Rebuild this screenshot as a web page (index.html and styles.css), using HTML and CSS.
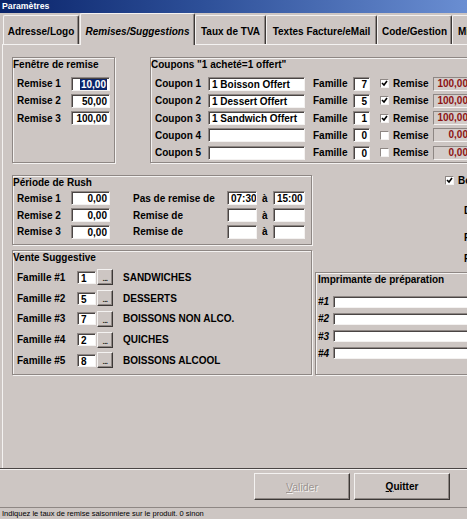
FILE: index.html
```html
<!DOCTYPE html>
<html lang="fr">
<head>
<meta charset="utf-8">
<title>Paramètres</title>
<link rel="stylesheet" href="styles.css">
</head>
<body>
<div class="window">
  <div class="titlebar">Paramètres</div>
  <div class="tabs">
    <div class="tab t1">Adresse/Logo</div>
    <div class="tab active t2">Remises/Suggestions</div>
    <div class="tab t3">Taux de TVA</div>
    <div class="tab t4">Textes Facture/eMail</div>
    <div class="tab t5">Code/Gestion</div>
    <div class="tab t6">Mise en page</div>
  </div>

  <div class="panel">
    <div class="top">
      <div class="group g-fenetre">
        <div class="gtitle">Fenêtre de remise</div>
        <div class="rows">
          <div class="row r17"><span class="lbl l54">Remise 1</span><span class="field num w39"><span class="sel">10,00</span></span></div>
          <div class="row r17"><span class="lbl l54">Remise 2</span><span class="field num w39">50,00</span></div>
          <div class="row r17"><span class="lbl l54">Remise 3</span><span class="field num w39">100,00</span></div>
        </div>
      </div>

      <div class="group g-coupons">
        <div class="gtitle">Coupons "1 acheté=1 offert"</div>
        <div class="rows">
          <div class="row r17">
            <span class="lbl l53">Coupon 1</span><span class="field w97">1 Boisson Offert</span>
            <span class="lbl fam">Famille</span><span class="field num w17">7</span>
            <span class="check on"><svg viewBox="0 0 7 7" width="7" height="7"><path d="M1 3 L3 5 L6 1" fill="none" stroke="#000" stroke-width="1.6"/></svg></span>
            <span class="lbl rem">Remise</span><span class="ro">100,00</span>
          </div>
          <div class="row r17">
            <span class="lbl l53">Coupon 2</span><span class="field w97">1 Dessert Offert</span>
            <span class="lbl fam">Famille</span><span class="field num w17">5</span>
            <span class="check on"><svg viewBox="0 0 7 7" width="7" height="7"><path d="M1 3 L3 5 L6 1" fill="none" stroke="#000" stroke-width="1.6"/></svg></span>
            <span class="lbl rem">Remise</span><span class="ro">100,00</span>
          </div>
          <div class="row r17">
            <span class="lbl l53">Coupon 3</span><span class="field w97">1 Sandwich Offert</span>
            <span class="lbl fam">Famille</span><span class="field num w17">1</span>
            <span class="check on"><svg viewBox="0 0 7 7" width="7" height="7"><path d="M1 3 L3 5 L6 1" fill="none" stroke="#000" stroke-width="1.6"/></svg></span>
            <span class="lbl rem">Remise</span><span class="ro">100,00</span>
          </div>
          <div class="row r17">
            <span class="lbl l53">Coupon 4</span><span class="field w97"></span>
            <span class="lbl fam">Famille</span><span class="field num w17">0</span>
            <span class="check"></span>
            <span class="lbl rem">Remise</span><span class="ro">0,00</span>
          </div>
          <div class="row r17">
            <span class="lbl l53">Coupon 5</span><span class="field w97"></span>
            <span class="lbl fam">Famille</span><span class="field num w17">0</span>
            <span class="check"></span>
            <span class="lbl rem">Remise</span><span class="ro">0,00</span>
          </div>
        </div>
      </div>
    </div>

    <div class="lower">
      <div class="leftcol">
        <div class="group g-rush">
          <div class="gtitle">Période de Rush</div>
          <div class="rows rush-rows">
            <div class="row r16">
              <span class="lbl l54">Remise 1</span><span class="field num w39">0,00</span>
              <span class="lbl pas">Pas de remise de</span><span class="field w30">07:30</span>
              <span class="lbl a">à</span><span class="field w32">15:00</span>
            </div>
            <div class="row r16">
              <span class="lbl l54">Remise 2</span><span class="field num w39">0,00</span>
              <span class="lbl pas">Remise de</span><span class="field w30"></span>
              <span class="lbl a">à</span><span class="field w32"></span>
            </div>
            <div class="row r16">
              <span class="lbl l54">Remise 3</span><span class="field num w39">0,00</span>
              <span class="lbl pas">Remise de</span><span class="field w30"></span>
              <span class="lbl a">à</span><span class="field w32"></span>
            </div>
          </div>
        </div>

        <div class="group g-vente">
          <div class="gtitle">Vente Suggestive</div>
          <div class="rows vente-rows">
            <div class="row r21"><span class="lbl l60">Famille #1</span><span class="field w19">1</span><span class="dots">...</span><span class="lbl cat">SANDWICHES</span></div>
            <div class="row r21"><span class="lbl l60">Famille #2</span><span class="field w19">5</span><span class="dots">...</span><span class="lbl cat">DESSERTS</span></div>
            <div class="row r21"><span class="lbl l60">Famille #3</span><span class="field w19">7</span><span class="dots">...</span><span class="lbl cat">BOISSONS NON ALCO.</span></div>
            <div class="row r21"><span class="lbl l60">Famille #4</span><span class="field w19">2</span><span class="dots">...</span><span class="lbl cat">QUICHES</span></div>
            <div class="row r21"><span class="lbl l60">Famille #5</span><span class="field w19">8</span><span class="dots">...</span><span class="lbl cat">BOISSONS ALCOOL</span></div>
          </div>
        </div>
      </div>

      <div class="rightcol">
        <div class="row bons"><span class="check on"><svg viewBox="0 0 7 7" width="7" height="7"><path d="M1 3 L3 5 L6 1" fill="none" stroke="#000" stroke-width="1.6"/></svg></span><span class="lbl bons-lbl">Bons</span></div>
        <div class="lbl side s1">Début</div>
        <div class="lbl side s2">Fin</div>
        <div class="lbl side s3">Fin</div>
        <div class="group g-imp">
          <div class="gtitle">Imprimante de préparation</div>
          <div class="rows imp-rows">
            <div class="row r17"><span class="lbl l15">#1</span><span class="field w150"></span></div>
            <div class="row r17"><span class="lbl l15">#2</span><span class="field w150"></span></div>
            <div class="row r17"><span class="lbl l15">#3</span><span class="field w150"></span></div>
            <div class="row r17"><span class="lbl l15">#4</span><span class="field w150"></span></div>
          </div>
        </div>
      </div>
    </div>
  </div>

  <div class="footer">
    <button class="btn disabled"><u>V</u>alider</button>
    <button class="btn"><u>Q</u>uitter</button>
  </div>
  <div class="status">Indiquez le taux de remise saisonniere sur le produit. 0 sinon</div>
</div>
</body>
</html>
```

FILE: styles.css
```css
* { box-sizing: border-box; }
html, body { margin: 0; padding: 0; }
body {
  width: 467px;
  height: 519px;
  overflow: hidden;
  background: #cdc6c3;
  font: bold 10px "Liberation Sans", Arial, sans-serif;
  color: #000;
}
.window {
  display: flex;
  flex-direction: column;
  width: 467px;
  height: 519px;
  overflow: hidden;
}

/* title bar */
.titlebar {
  flex: none;
  height: 13px;
  padding-left: 2px;
  line-height: 13px;
  font-size: 8.7px;
  color: #fff;
  background: linear-gradient(90deg, #0a246a 0, #2d4f98 200px, #6a8ed2 467px);
}

/* tabs */
.tabs {
  flex: none;
  height: 31px;
  display: flex;
  align-items: flex-end;
  padding-left: 3px;
  white-space: nowrap;
  position: relative;
  z-index: 1;
}
.tab {
  flex: none;
  height: 29px;
  padding-top: 3px;
  line-height: 26px;
  text-align: center;
  border-top: 1px solid #f4f2f1;
  border-left: 1px solid #f4f2f1;
  border-right: 1px solid #3c3836;
  box-shadow: inset -1px 0 0 #8e8784;
  border-radius: 2px 2px 0 0;
  overflow: hidden;
}
.tab.active {
  height: 32px;
  padding-top: 5px;
  margin-bottom: -1px;
  font-style: italic;
  background: #cdc6c3;
}
.t1 { width: 76px; }
.t2 { width: 115px; margin-left: 1px; }
.t3 { width: 71px; }
.t4 { width: 111px; }
.t5 { width: 75px; }
.t6 { width: 80px; text-align: left; padding-left: 5px; }

/* main panel */
.panel {
  flex: none;
  height: 424px;
  margin-left: 2px;
  border-top: 1px solid #f4f2f1;
  border-left: 1px solid #f4f2f1;
  padding: 12px 0 0 9px;
}
.top {
  display: flex;
  gap: 35px;
  height: 106px;
}
.group {
  flex: none;
  border: 1px solid #8e8784;
  box-shadow: inset 1px 1px 0 #f4f2f1, 1px 1px 0 #f4f2f1;
}
.gtitle {
  height: 13px;
  line-height: 13px;
  white-space: nowrap;
}
.rows { margin-top: 4px; padding-left: 4px; }
.row {
  display: flex;
  align-items: center;
  white-space: nowrap;
}
.r17 { height: 17.25px; }
.r16 { height: 16.75px; }
.r21 { height: 20.75px; }
.lbl { flex: none; }
.l53 { width: 53px; }
.l54 { width: 54px; }
.l60 { width: 60px; }
.l15 { width: 15px; font-style: italic; }

.g-fenetre { width: 103px; }
.g-coupons { width: 340px; }

.field {
  flex: none;
  height: 14px;
  line-height: 11px;
  padding: 1px 2px 0 3px;
  background: #fff;
  border: 1px solid;
  border-color: #8e8784 #f4f2f1 #f4f2f1 #8e8784;
  box-shadow: inset 1px 1px 0 #4a4544;
  overflow: hidden;
}
.field.num { text-align: right; padding-right: 2px; }
.sel { background: #0a246a; color: #fff; padding: 0 1px; }
.w39 { width: 39px; }
.w97 { width: 97px; }
.w17 { width: 17px; }
.w30 { width: 30px; }
.w32 { width: 32px; }
.w19 { width: 19px; height: 13px; }
.w150 { width: 150px; height: 12px; }

.fam { margin-left: 8px; width: 40px; }
.rem { margin-left: 4px; width: 40px; }
.check {
  flex: none;
  width: 9px;
  height: 9px;
  margin-left: 10px;
  background: #fff;
  border: 1px solid;
  border-color: #8e8784 #f4f2f1 #f4f2f1 #8e8784;
  display: flex;
  align-items: center;
  justify-content: center;
}
.check svg { display: block; }
.ro {
  flex: none;
  width: 39px;
  height: 14px;
  line-height: 12px;
  padding-right: 3px;
  text-align: right;
  color: #8d1414;
  background: #d3ccc9;
  border: 1px solid;
  border-color: #8e8784 #f4f2f1 #f4f2f1 #8e8784;
}

/* lower section */
.lower {
  display: flex;
  gap: 3px;
  margin-top: 12px;
}
.leftcol {
  flex: none;
  width: 300px;
  display: flex;
  flex-direction: column;
  gap: 5px;
}
.g-rush { height: 70px; }
.rush-rows { margin-top: 1px; }
.pas { margin-left: 23px; width: 94px; }
.a { margin-left: 5px; width: 11px; }
.g-vente { height: 125px; }
.vente-rows { margin-top: 3px; }
.dots {
  flex: none;
  width: 16px;
  height: 16px;
  margin-left: 1px;
  padding-top: 4px;
  font-weight: bold;
  font-size: 8px;
  line-height: 10px;
  letter-spacing: -0.5px;
  text-align: center;
  color: #222;
  border: 1px solid;
  border-color: #f4f2f1 #3c3836 #3c3836 #f4f2f1;
  box-shadow: inset -1px -1px 0 #8e8784;
}
.cat { margin-left: 10px; }

.rightcol {
  flex: none;
  width: 200px;
  display: flex;
  flex-direction: column;
}
.bons { height: 11px; padding-left: 120px; }
.bons-lbl { margin-left: 4px; }
.side { height: 13px; line-height: 13px; padding-left: 149px; }
.s1 { margin-top: 18px; }
.s2 { margin-top: 14px; }
.s3 { margin-top: 8px; }
.g-imp { margin-top: 7px; height: 103px; padding-left: 2px; }
.imp-rows { margin-top: 7px; padding-left: 0; }

/* footer */
.footer {
  flex: none;
  height: 39px;
  border-top: 1px solid #4a4544;
  box-shadow: inset 0 1px 0 #f4f2f1;
  display: flex;
  justify-content: flex-end;
  gap: 4px;
  padding: 4px 17px 0 0;
}
.btn {
  width: 96px;
  height: 27px;
  font: bold 10px "Liberation Sans", Arial, sans-serif;
  color: #000;
  background: #cdc6c3;
  border: 1px solid;
  border-color: #f4f2f1 #3c3836 #3c3836 #f4f2f1;
  box-shadow: inset -1px -1px 0 #8e8784;
  padding: 0;
}
.btn.disabled {
  color: #9c9490;
  font-weight: normal;
  font-size: 10.5px;
  text-shadow: 1px 1px 0 #f4f2f1;
}

/* status bar */
.status {
  flex: none;
  height: 12px;
  border-top: 1px solid #8e8784;
  font-weight: normal;
  font-size: 7.5px;
  line-height: 11px;
  padding-left: 2px;
  white-space: nowrap;
}
```
